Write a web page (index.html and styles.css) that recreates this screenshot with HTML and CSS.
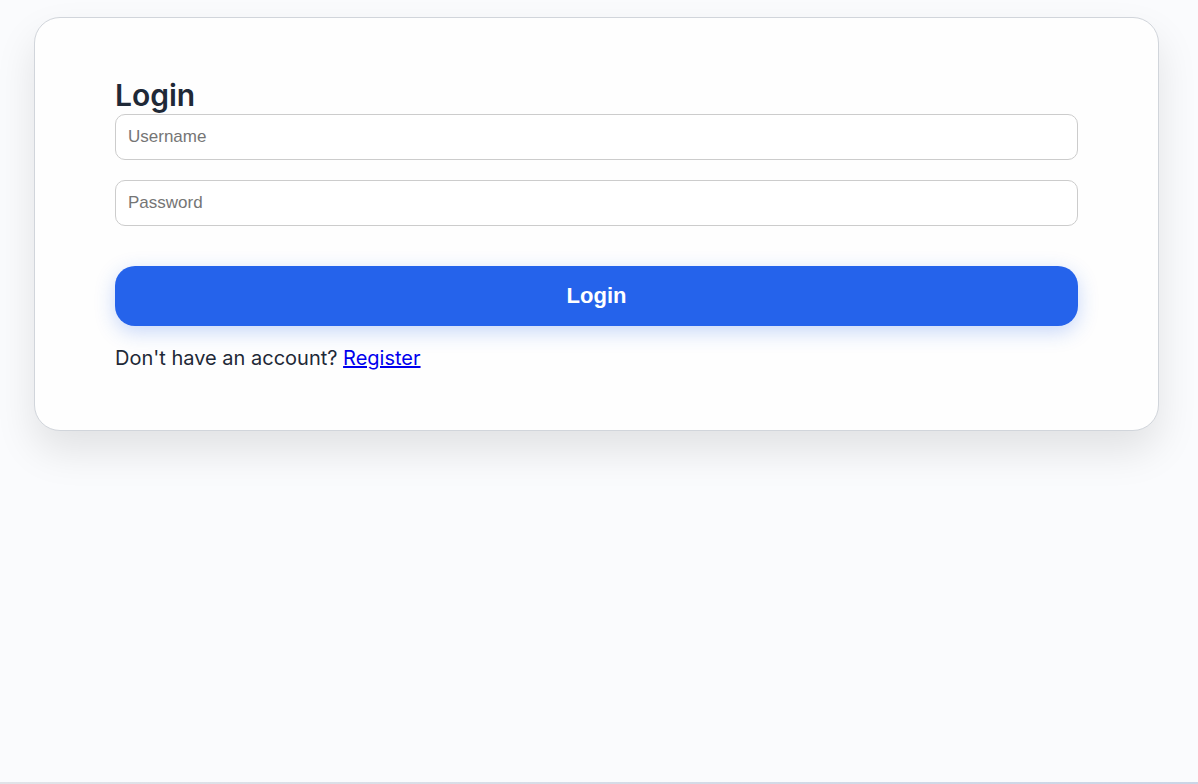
FILE: index.html
```html
<!DOCTYPE html>
<html lang="en">
  <head>
    <meta charset="UTF-8" />
    <meta name="viewport" content="width=device-width, initial-scale=1" />
    <title>Login</title>
    <link rel="stylesheet" href="styles.css">
  </head>
  <body>
    <main class="container">
      <h2>Login</h2>
      <form id="loginForm">
        <input type="text" name="username" placeholder="Username" aria-label="Username" required />
        <input type="password" name="password" placeholder="Password" aria-label="Password" required />
        <button type="submit">Login</button>
      </form>
      <p>Don't have an account? <a href="#register">Register</a></p>
    </main>
    <footer class="page-edge"></footer>
  </body>
</html>
```

FILE: styles.css
```css
* {
  box-sizing: border-box;
}
body {
  display: flex;
  flex-direction: column;
  min-height: 100vh;
  margin: 0;
  font-family: Inter, "Liberation Sans", sans-serif;
  font-size: 20px;
  line-height: 24px;
  color: #1f2937;
  background-color: #fafbfd;
}
.container {
  margin: 17px 39px 0 34px;
  padding: 60px 80px;
  background-color: #fefefe;
  border: 1px solid #d1d5db;
  border-radius: 26px;
  box-shadow: 0 20px 40px rgba(0, 0, 0, 0.1);
}
h2 {
  margin: 0 0 2px;
  font-size: 30px;
  line-height: 34px;
  font-weight: 600;
}
input,
button {
  display: block;
  width: 100%;
  font-family: "Liberation Sans", Arial, sans-serif;
}
input {
  height: 46px;
  margin-bottom: 20px;
  padding: 12px;
  border: 1px solid #ccc;
  border-radius: 10px;
  font-size: 17px;
  background-color: #fff;
}
input::placeholder {
  color: #757575;
}
button {
  height: 60px;
  margin-top: 40px;
  border: none;
  border-radius: 20px;
  font-size: 22px;
  font-weight: bold;
  color: white;
  background-color: #2563eb;
  box-shadow: 0 6px 20px rgba(37, 99, 235, 0.25);
  cursor: pointer;
}
button:hover {
  background-color: #1d4ed8;
}
p {
  margin: 20px 0 0;
}
a {
  color: #0000ee;
}
.page-edge {
  height: 2px;
  margin-top: auto;
  background: linear-gradient(to right, #e1e3e8, #cbd5e6);
}
```
